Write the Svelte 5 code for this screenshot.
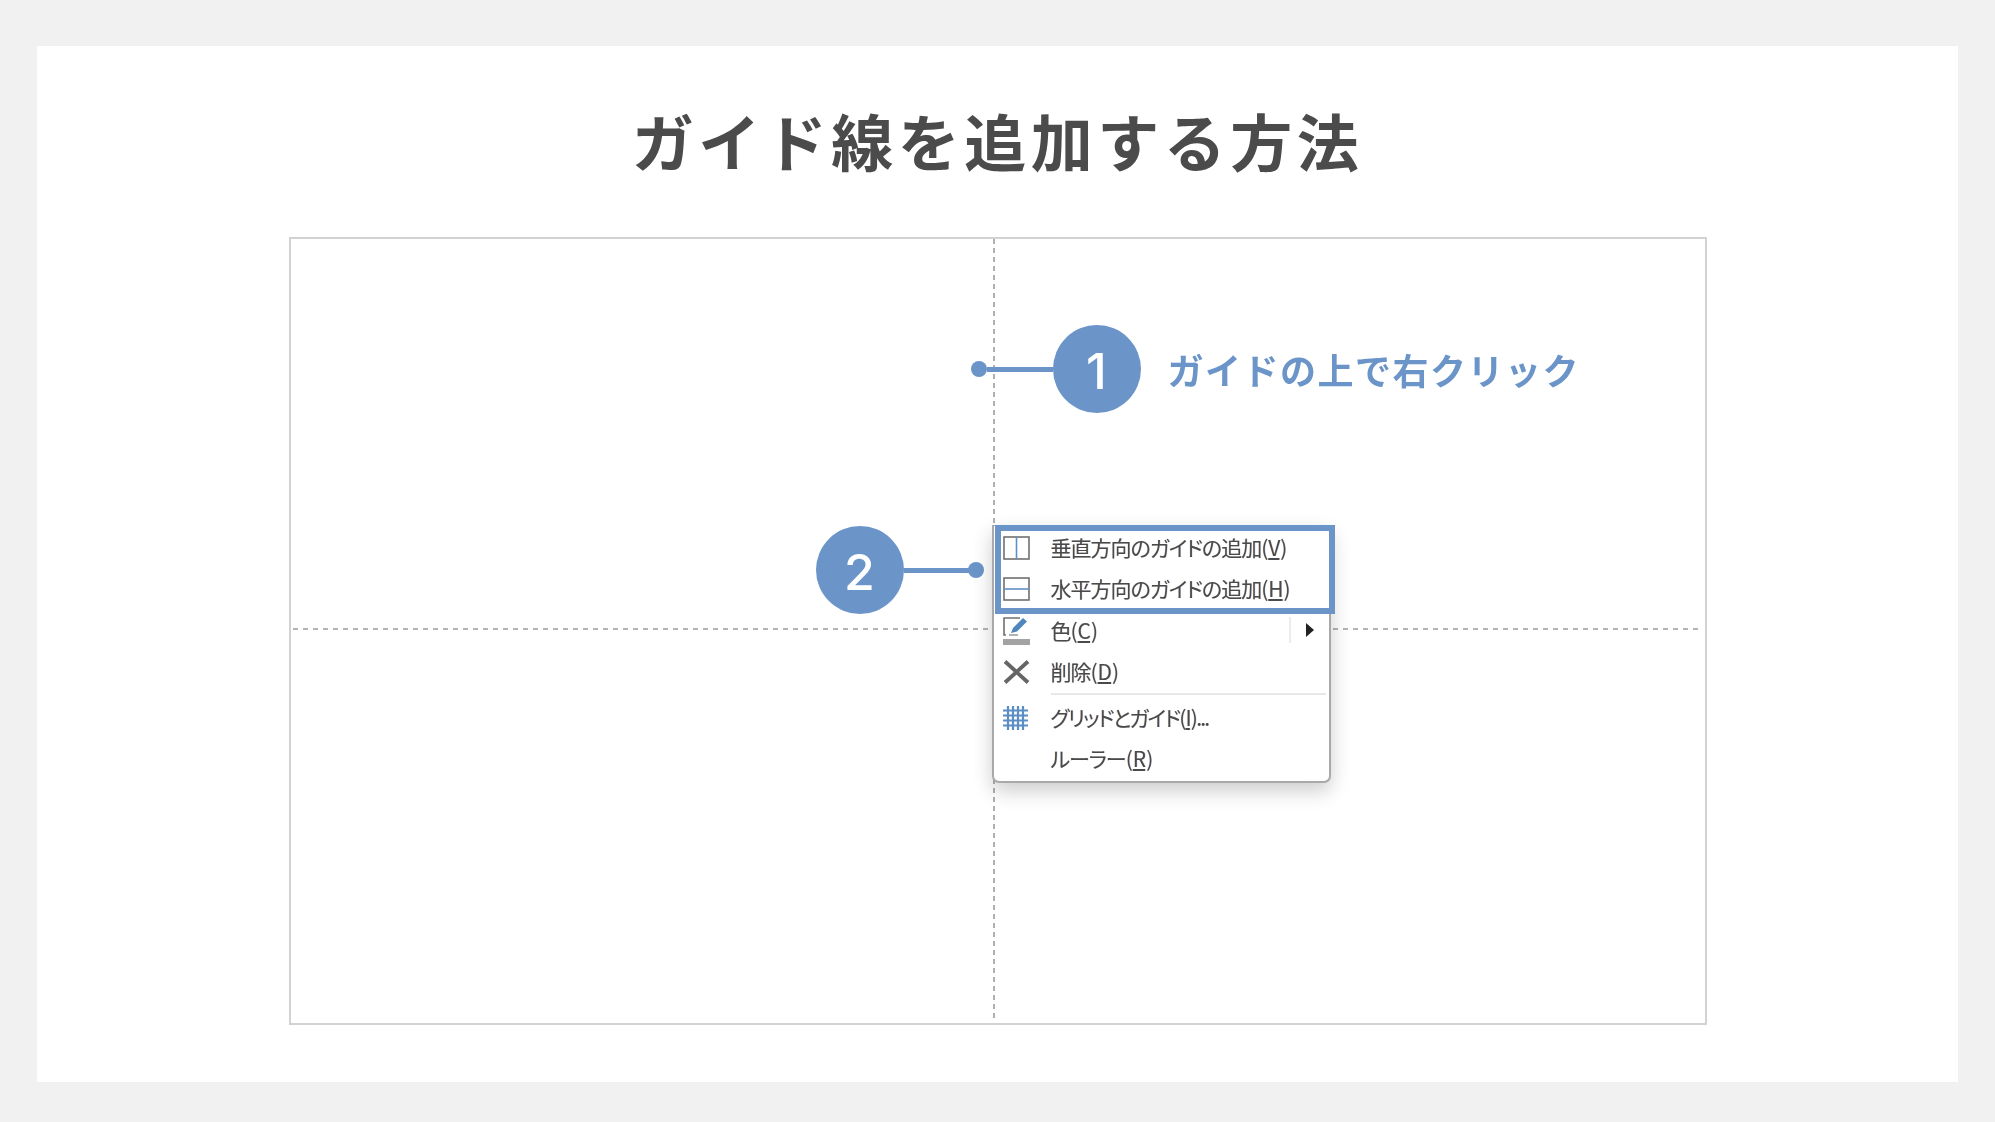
<script>
	const items = [
		{ icon: "vsplit", text: "垂直方向のガイドの追加(", key: "V", tail: ")" },
		{ icon: "hsplit", text: "水平方向のガイドの追加(", key: "H", tail: ")" },
		{ icon: "color", text: "色(", key: "C", tail: ")", sub: true },
		{ icon: "cross", text: "削除(", key: "D", tail: ")", sep: true },
		{ icon: "grid", text: "グリッドとガイド(", key: "I", tail: ")...", narrow: true },
		{ icon: "", text: "ルーラー(", key: "R", tail: ")" },
	];
</script>

<div class="page">
	<div class="card">
		<h1 class="title">ガイド線を追加する方法</h1>
		<div class="slide">
			<div class="guide-v"></div>
			<div class="guide-h"></div>

			<div class="callout first">
				<span class="dot"></span>
				<span class="line"></span>
				<span class="num">1</span>
				<span class="label">ガイドの上で右クリック</span>
			</div>

			<div class="callout second">
				<span class="num">2</span>
				<span class="line short"></span>
				<span class="dot"></span>
			</div>

			<div class="menu">
				{#each items as item}
					<div class="row">
						<span class="icon">
							{#if item.icon === "vsplit"}
								<svg width="27" height="24" viewBox="0 0 27 24">
									<rect x="1" y="1" width="25" height="22" fill="none" stroke="#707070" stroke-width="1.6" />
									<path d="M13.5 1v22" stroke="#5f8fc4" stroke-width="1.6" />
								</svg>
							{:else if item.icon === "hsplit"}
								<svg width="27" height="24" viewBox="0 0 27 24">
									<rect x="1" y="1" width="25" height="22" fill="none" stroke="#707070" stroke-width="1.6" />
									<path d="M1 12h25" stroke="#5f8fc4" stroke-width="1.6" />
								</svg>
							{:else if item.icon === "color"}
								<svg width="28" height="30" viewBox="0 0 28 30">
									<path d="M17 2H1v17h2" fill="none" stroke="#707070" stroke-width="1.6" />
									<path d="M8 17l2-5L20 2l4 3.500L14 15.500z" fill="#4f87bd" />
									<path d="M6 19h9" stroke="#9a9a9a" stroke-width="1.500" />
									<rect y="23" width="27" height="6" fill="#a3a3a3" />
								</svg>
							{:else if item.icon === "cross"}
								<svg width="27" height="24" viewBox="0 0 27 24">
									<path d="M2 1.500L25 22.500M25 1.500L2 22.500" stroke="#656565" stroke-width="3.800" />
								</svg>
							{:else if item.icon === "grid"}
								<svg width="25" height="24" viewBox="0 0 25 24">
									<path d="M5 0v24M10 0v24M15 0v24M20 0v24M0 4.500h25M0 9.500h25M0 14.500h25M0 19.500h25" stroke="#5b8ec4" stroke-width="2.200" />
								</svg>
							{/if}
						</span>
						<span class="text" class:narrow={item.narrow}>{item.text}<u>{item.key}</u>{item.tail}</span>
						{#if item.sub}
							<span class="sub"><i class="arrow"></i></span>
						{/if}
					</div>
					{#if item.sep}
						<div class="sep"></div>
					{/if}
				{/each}
				<div class="highlight"></div>
			</div>
		</div>
	</div>
</div>

<style>
	:global(body) {
		margin: 0;
		background: #f1f1f1;
		overflow: hidden;
	}

	.page {
		box-sizing: border-box;
		height: 1122px;
		padding: 46px 37px 40px;
		font-family: "Noto Sans CJK JP", "Noto Sans", sans-serif;
	}

	.card {
		height: 100%;
		background: #fff;
		display: flex;
		flex-direction: column;
		align-items: center;
	}

	.title {
		box-sizing: border-box;
		height: 191px;
		margin: 0;
		padding-bottom: 4px;
		display: flex;
		align-items: center;
		font-size: 62px;
		font-weight: 700;
		letter-spacing: 4.500px;
		color: #4b4b4b;
		filter: blur(0.4px);
	}

	.slide {
		position: relative;
		box-sizing: border-box;
		width: 1418px;
		height: 788px;
		border: 2px solid #d2d2d2;
	}

	.guide-v {
		position: absolute;
		left: 702px;
		top: 0;
		bottom: 4px;
		width: 2px;
		background: repeating-linear-gradient(to bottom, #b0b0b0 0 5px, transparent 5px 9px);
	}

	.guide-h {
		position: absolute;
		left: 2px;
		right: 2px;
		top: 389px;
		height: 2px;
		background: repeating-linear-gradient(to right, #b4b4b4 0 5px, transparent 5px 10px);
	}

	.callout {
		position: absolute;
		display: flex;
		align-items: center;
	}

	.first {
		left: 680px;
		top: 86px;
	}

	.second {
		left: 525px;
		top: 287px;
	}

	.dot {
		width: 16px;
		height: 16px;
		border-radius: 50%;
		background: #6b95c9;
	}

	.line {
		width: 66px;
		height: 5px;
		background: #6b95c9;
	}

	.line.short {
		width: 70px;
		margin-right: -6px;
	}

	.num {
		width: 88px;
		height: 88px;
		border-radius: 50%;
		background: #6b95c9;
		color: #fff;
		display: flex;
		align-items: center;
		justify-content: center;
		padding-top: 3px;
		box-sizing: border-box;
		font-size: 50px;
		font-weight: 500;
		font-family: Inter, sans-serif;
	}

	.label {
		margin-left: 27px;
		font-size: 36px;
		font-weight: 700;
		letter-spacing: 1.500px;
		color: #6b95c9;
		filter: blur(0.4px);
	}

	.menu {
		position: absolute;
		left: 701px;
		top: 286px;
		box-sizing: border-box;
		width: 339px;
		height: 258px;
		background: #fff;
		border: 2px solid #a9a9a9;
		border-width: 1px 2px 2px 2px;
		border-radius: 0 0 7px 7px;
		box-shadow: 0 8px 20px rgba(0, 0, 0, 0.2);
	}

	.row {
		height: 41.500px;
		display: flex;
		align-items: center;
		padding-left: 9px;
		font-size: 21px;
		color: #4a4a4a;
		font-feature-settings: "palt";
		text-shadow: -0.5px 0 rgba(225, 150, 70, 0.3), 0.5px 0 rgba(70, 130, 225, 0.3);
		filter: blur(0.4px);
	}

	.icon {
		width: 48px;
		flex: none;
		display: flex;
		align-items: center;
		padding-top: 2px;
	}

	.text {
		letter-spacing: -1px;
		white-space: nowrap;
	}

	.text u {
		margin: 0 1px;
	}

	.text.narrow {
		letter-spacing: -1.800px;
	}

	.sub {
		margin-left: auto;
		height: 26px;
		width: 38px;
		border-left: 2px solid #ececec;
		display: flex;
		align-items: center;
		justify-content: center;
	}

	.arrow {
		width: 0;
		height: 0;
		border-left: 8px solid #222;
		border-top: 7px solid transparent;
		border-bottom: 7px solid transparent;
	}

	.sep {
		height: 2px;
		margin: 1px 3px 1px 57px;
		background: #e8e8e8;
	}

	.highlight {
		position: absolute;
		left: 1px;
		top: -1px;
		right: -6px;
		height: 89px;
		box-sizing: border-box;
		border: 6px solid #6b95c9;
	}
</style>
